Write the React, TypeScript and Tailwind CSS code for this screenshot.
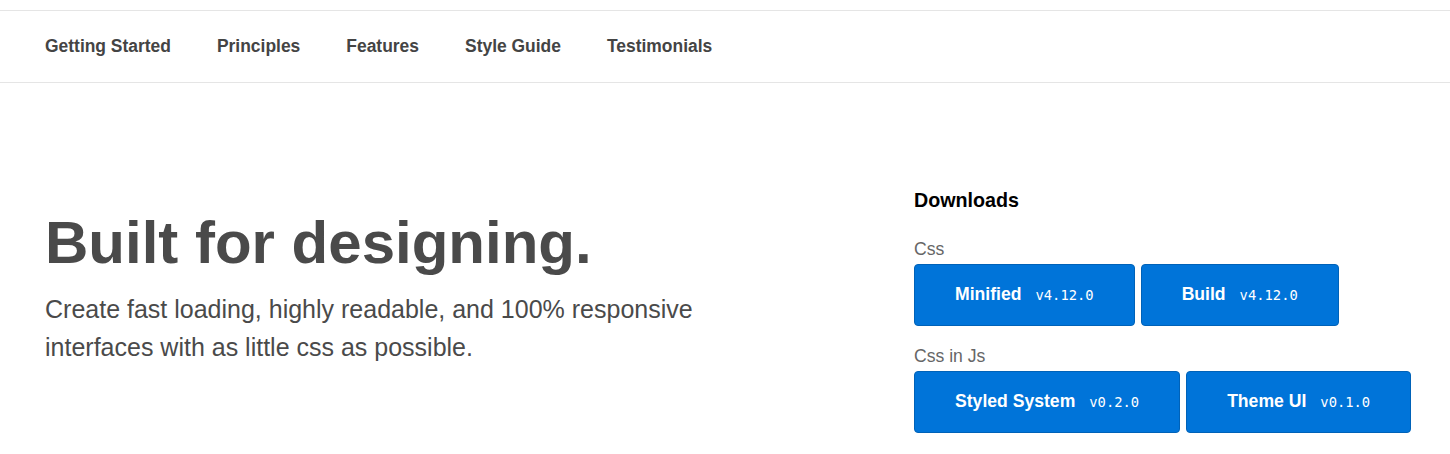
import React from "react";

type Download = {
  name: string;
  version: string;
};

const navItems = ["Getting Started", "Principles", "Features", "Style Guide", "Testimonials"];

const groups: { label: string; items: Download[] }[] = [
  {
    label: "Css",
    items: [
      { name: "Minified", version: "v4.12.0" },
      { name: "Build", version: "v4.12.0" },
    ],
  },
  {
    label: "Css in Js",
    items: [
      { name: "Styled System", version: "v0.2.0" },
      { name: "Theme UI", version: "v0.1.0" },
    ],
  },
];

function DownloadButton({ item }: { item: Download }) {
  return (
    <a
      href="#"
      className="flex h-[62px] shrink-0 items-baseline justify-center whitespace-nowrap rounded-[4px] border border-[#0062b8] bg-[#0074d9] px-[40px] pt-[17px] text-white"
    >
      <span className="text-[17.6px] font-bold leading-[24px]">{item.name}</span>
      <span className="ml-[14px] font-['DejaVu_Sans_Mono',monospace] text-[13.8px] leading-[24px]">
        {item.version}
      </span>
    </a>
  );
}

export default function App() {
  return (
    <div className="min-h-screen bg-white pt-[10px] font-['Liberation_Sans',Arial,sans-serif] text-[#4a4a4a]">
      {/* nav */}
      <nav className="flex h-[73px] items-center gap-[46px] border-y border-[#e5e5e5] px-[45px]">
        {navItems.map((item) => (
          <a key={item} href="#" className="text-[17.45px] font-bold text-[#444]">
            {item}
          </a>
        ))}
      </nav>

      {/* hero */}
      <main className="flex px-[45px] pt-[105px]">
        <div className="mt-[19px] w-[869px] shrink-0">
          <h1 className="text-[60px] font-bold leading-[72px] text-[#4a4a4a]">Built for designing.</h1>
          <p className="mt-[12px] max-w-[700px] text-[25px] leading-[37.5px] text-[#4a4a4a]">
            Create fast loading, highly readable, and 100% responsive interfaces with as little css as
            possible.
          </p>
        </div>

        <div className="shrink-0">
          <h2 className="text-[19.7px] font-bold leading-[24px] text-black">Downloads</h2>
          <div className="mt-[24px] flex flex-col gap-[17px]">
            {groups.map((group) => (
              <div key={group.label}>
                <div className="text-[17.6px] leading-[26px] text-[#666]">{group.label}</div>
                <div className="mt-[2px] flex gap-[6px]">
                  {group.items.map((item) => (
                    <DownloadButton key={item.name} item={item} />
                  ))}
                </div>
              </div>
            ))}
          </div>
        </div>
      </main>
    </div>
  );
}
